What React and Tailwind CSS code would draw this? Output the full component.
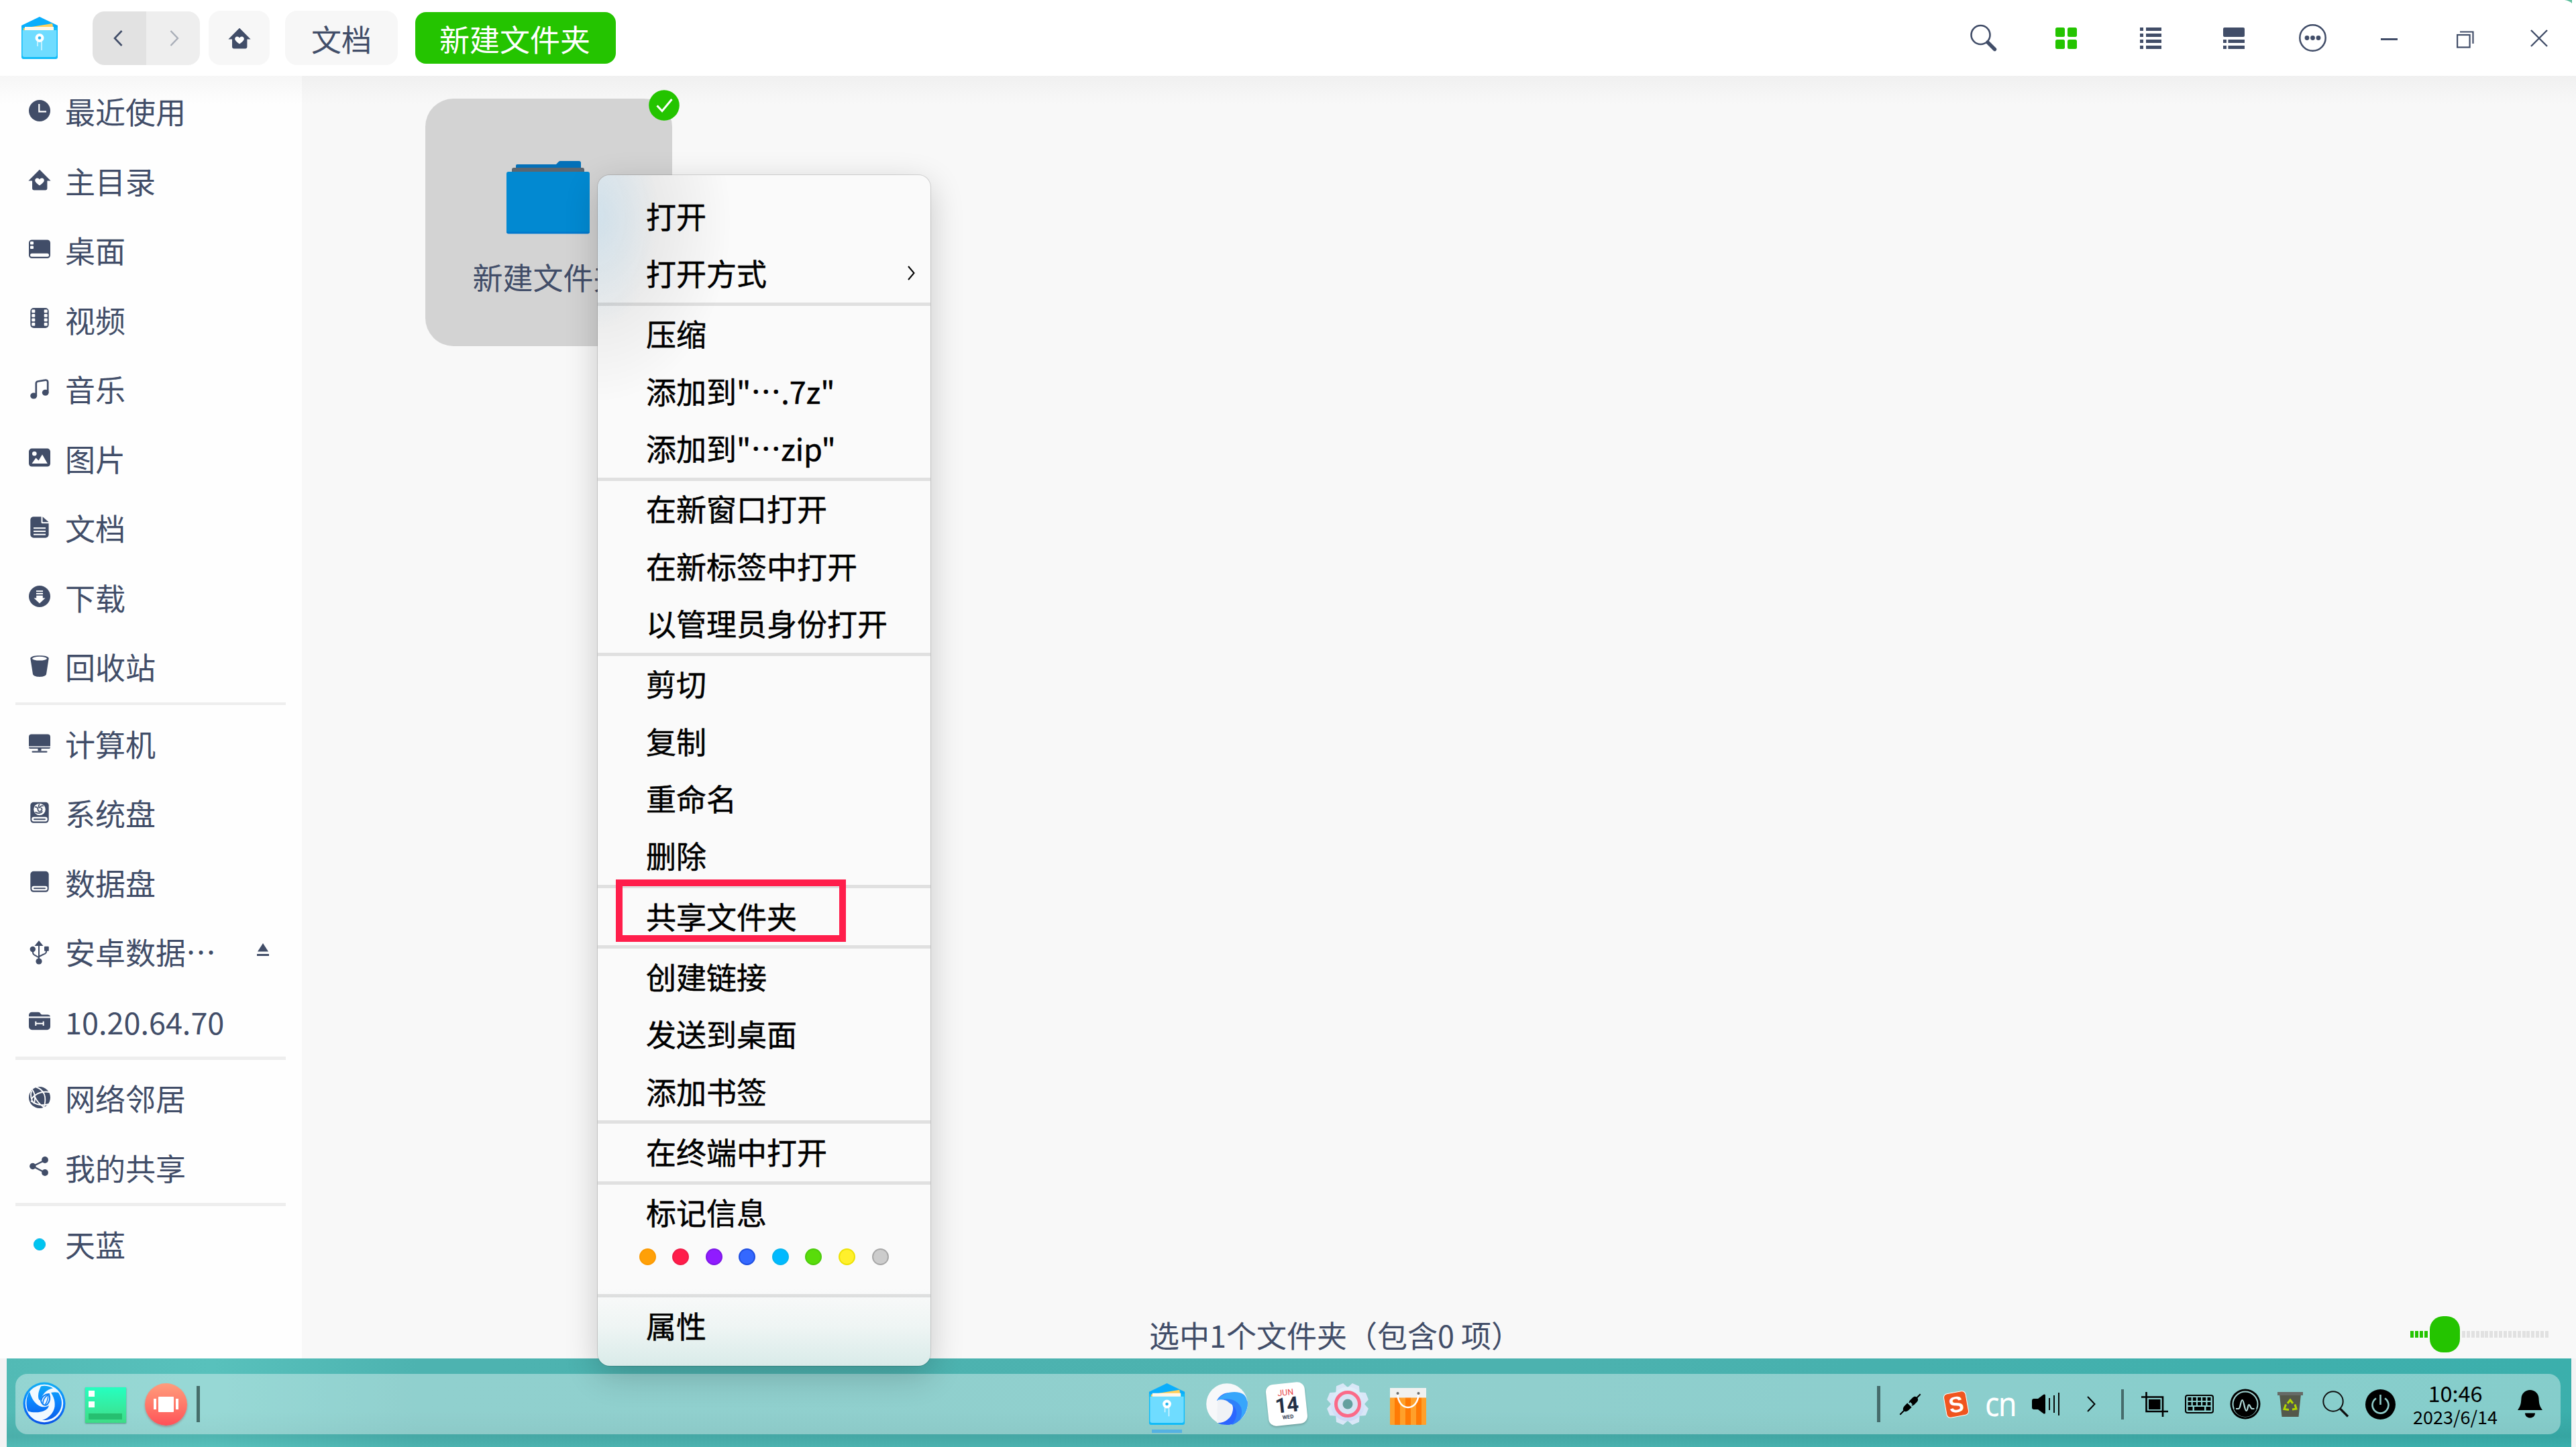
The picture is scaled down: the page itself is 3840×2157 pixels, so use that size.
import React from "react";

const INK = "#414d68";

/* ---------- sidebar glyphs, 32 x 32 ---------- */

function Glyph({ children }) {
  return (
    <svg viewBox="0 0 32 32" className="h-8 w-8 shrink-0 overflow-visible" fill={INK}>
      {children}
    </svg>
  );
}

const HouseShape = () => (
  <>
    <path d="M16 .8 32.6 17.6h-5.2V29a2.4 2.4 0 0 1-2.4 2.4H7.4A2.4 2.4 0 0 1 5 29V17.6H-.6z" />
    <path
      fill="#fff"
      d="M16 24.6c-4-3-6.8-5.2-6.8-7.8 0-2 1.500-3.300 3.300-3.300 1.500 0 2.800.8 3.500 2.100.7-1.300 2-2.100 3.500-2.100 1.800 0 3.300 1.300 3.300 3.300 0 2.600-2.800 4.800-6.800 7.800z"
    />
  </>
);

const Recent = () => (
  <Glyph>
    <circle cx="16" cy="16" r="16" />
    <path d="M15.300 6v11.300H26" fill="none" stroke="#fff" strokeWidth="2.200" />
  </Glyph>
);
const Home = () => (
  <Glyph>
    <HouseShape />
  </Glyph>
);
const Desktop = () => (
  <Glyph>
    <rect y="1.500" width="32" height="27.500" rx="4.500" />
    <rect x="2" y="4" width="5" height="4.500" rx="1" fill="#fff" />
    <rect x="2" y="10.500" width="5" height="4.500" rx="1" fill="#fff" />
    <rect x="2" y="21.800" width="28" height="5" rx="2.500" fill="#fff" />
  </Glyph>
);
const Video = () => (
  <Glyph>
    <rect x="2.300" width="27.400" height="30" rx="5" />
    {[2.5, 9, 15.500, 22].map((y) => (
      <g key={y} fill="#fff">
        <rect x="4.300" y={y} width="5" height="4.700" rx="1" />
        <rect x="22.700" y={y} width="5" height="4.700" rx="1" />
      </g>
    ))}
  </Glyph>
);
const Music = () => (
  <Glyph>
    <path
      d="M10.800 27V8.600c0-1.600 1-2.800 2.600-3.100l11-1.900c2-.4 3.800.8 3.800 2.800V22"
      fill="none"
      stroke={INK}
      strokeWidth="2.700"
    />
    <ellipse cx="7.200" cy="27" rx="5" ry="4.600" />
    <ellipse cx="24.700" cy="22.200" rx="4.900" ry="4.500" />
  </Glyph>
);
const Pictures = () => (
  <Glyph>
    <rect y="2.600" width="32" height="27" rx="4.500" />
    <circle cx="8.300" cy="10.300" r="3.300" fill="#fff" />
    <path d="M4.500 25 10.500 16.500l4 4 5.500-9 7.800 13.500z" fill="#fff" />
  </Glyph>
);
const Documents = () => (
  <Glyph>
    <path d="M7 .2h11.500v8.300c0 1 .7 1.800 1.800 1.800h9.300V27a4.700 4.700 0 0 1-4.700 4.700H7A4.700 4.700 0 0 1 2.300 27V4.900A4.700 4.700 0 0 1 7 .2z" />
    <path d="M20.500.3 29.600 8.300h-9.100z" />
    <path d="M7 17.200h18M7 22h18M7 26.800h18" stroke="#fff" strokeWidth="2" />
  </Glyph>
);
const Downloads = () => (
  <Glyph>
    <circle cx="16" cy="16" r="16" />
    <path d="M11 7.200h10v2H11zM11 11h10v2H11zM11.200 14.800h9.600v3.700h3.700L16 26.500l-8.500-8h3.700z" fill="#fff" />
  </Glyph>
);
const Trash = () => (
  <Glyph>
    <path d="M2.300 4.500C2.300 1.600 8 .2 16 .2s13.700 1.400 13.700 4.300L26 28c-.4 2.400-4.600 3.900-10 3.900S6.400 30.400 6 28z" />
    <ellipse cx="16" cy="4.700" rx="11" ry="2.900" fill="#fff" />
  </Glyph>
);
const Computer = () => (
  <Glyph>
    <path d="M4 3.500h24a4 4 0 0 1 4 4v14H0v-14a4 4 0 0 1 4-4zM0 23h32c0 1.600-1 2-2.500 2H18.500v3.500h-5V25h-11C1 25 0 24.600 0 23z" />
    <rect x="4.500" y="28.500" width="23" height="2.300" rx="1.100" />
  </Glyph>
);
const DiskBase = () => (
  <>
    <rect x="2.300" y=".8" width="27.400" height="31" rx="4.700" />
    <rect x="4.300" y="22.800" width="23.400" height="6.800" rx="3" fill="#fff" />
    <rect x="7" y="25.300" width="18" height="1.900" rx=".9" />
  </>
);
const SystemDisk = () => (
  <Glyph>
    <DiskBase />
    <circle cx="16" cy="11.500" r="8.800" fill="#fff" />
    <g fill="none" stroke={INK} strokeWidth="1.700">
      <path d="M9 8c3-.5 4.500 1 4.500 3.500s2 4 4.500 2.500 2-4.500-.5-4.500" />
      <path d="M16 3.500c-1.800 2-1.800 4-.5 6M9.500 15.500c3.500 2.500 8.500 2 11-1M22 6.500c-2.500-1-5 0-6 3" />
    </g>
  </Glyph>
);
const DataDisk = () => (
  <Glyph>
    <DiskBase />
  </Glyph>
);
const Usb = () => (
  <Glyph>
    <path d="M15 0 21.500 8h-13z" />
    <path d="M15 6v24M6 13v4.500c0 3 1.500 4 4 5l5 3M26 13v3.500c0 2.500-2 3.500-4.500 4.300L15 24" fill="none" stroke={INK} strokeWidth="2" />
    <circle cx="5.800" cy="13" r="4.200" />
    <rect x="23" y="8.800" width="6.800" height="7" rx="1" />
    <circle cx="15" cy="31" r="4.600" />
  </Glyph>
);
const NetFolder = () => (
  <Glyph>
    <path d="M4.500 3.700h9.500c1.800 0 2.500.8 3.500 2.200.8 1 1.600 1.600 3 1.600H28c2 0 3.500 1 4 2.800H0V8.200a4.500 4.500 0 0 1 4.500-4.500z" />
    <path d="M0 12.500h32v13a4.700 4.700 0 0 1-4.700 4.700H4.700A4.700 4.700 0 0 1 0 25.500z" />
    <path d="M10.300 17.500v6.500M21.700 17.500v6.500M10.300 20.800h11.400" stroke="#fff" strokeWidth="2" />
  </Glyph>
);
const Network = () => (
  <Glyph>
    <circle cx="16" cy="16" r="16" />
    <g fill="none" stroke="#fff" strokeWidth="1.900">
      <path d="M5 4C9 10 10 14 8 25M8 25C3 20 2 12 4 6M4 18C10 10 18 6 31 8M10 0c12 4 18 14 12 32M3 21c8 6 16 8 26 5M9 15c3 7 8 12 14 16" />
    </g>
  </Glyph>
);
const Share = () => (
  <Glyph>
    <path d="M24 6.500 6 15.500 24 25" fill="none" stroke={INK} strokeWidth="2.500" />
    <circle cx="5.800" cy="15.500" r="4.700" />
    <circle cx="24" cy="6" r="4.900" />
    <circle cx="24" cy="25" r="4.900" />
  </Glyph>
);
const SkyDot = () => (
  <Glyph>
    <circle cx="16" cy="17" r="8.600" fill="#00c5f0" stroke="#12b4ea" strokeWidth="1" />
  </Glyph>
);

const sidebar = [
  [
    ["最近使用", Recent],
    ["主目录", Home],
    ["桌面", Desktop],
    ["视频", Video],
    ["音乐", Music],
    ["图片", Pictures],
    ["文档", Documents],
    ["下载", Downloads],
    ["回收站", Trash],
  ],
  [
    ["计算机", Computer],
    ["系统盘", SystemDisk],
    ["数据盘", DataDisk],
    ["安卓数据⋯", Usb, true],
    ["10.20.64.70", NetFolder],
  ],
  [
    ["网络邻居", Network],
    ["我的共享", Share],
  ],
  [["天蓝", SkyDot]],
];

function Sidebar() {
  return (
    <nav className="w-[450px] shrink-0 bg-[linear-gradient(#f6f6f6,#fefefe_42px,#fefefe)] pt-[1.500px]">
      {sidebar.map((group, i) => (
        <React.Fragment key={i}>
          {i > 0 && <div className="mb-[6px] ml-[23px] mt-[0.500px] h-[4.500px] w-[403px] bg-[#eeeeee]" />}
          {group.map(([label, Icon, eject]) => (
            <div key={label} className="flex h-[103.500px] items-center gap-[22px] pl-[43px] pr-[49px]">
              <div className="-mt-[3px]">
                <Icon />
              </div>
              <span className="flex-1 whitespace-nowrap">{label}</span>
              {eject && (
                <svg viewBox="0 0 18 19" className="-mt-2 h-[19px] w-[18px]" fill={INK}>
                  <path d="M9 0l8 12.500H1zM0 16h18v3H0z" />
                </svg>
              )}
            </div>
          ))}
        </React.Fragment>
      ))}
    </nav>
  );
}

/* ---------- file manager logo, shared by title bar and dock ---------- */

function FilesLogo({ className }) {
  return (
    <svg viewBox="0 0 54 63" className={className}>
      <path d="M0 13 27 0l27 13v8H0z" fill="#0aaefc" />
      <path d="M0 16h54v44a3 3 0 0 1-3 3H3a3 3 0 0 1-3-3z" fill="#12bcf8" />
      <path d="M3 17 46 10l2 10H3z" fill="#ffd05a" />
      <path d="M5 15h43v7H5z" fill="#fff8ea" />
      <path d="M1.500 20h51v37a3 3 0 0 1-3 3h-45a3 3 0 0 1-3-3z" fill="#6fdcff" />
      <circle cx="27" cy="31.500" r="6.500" fill="#fff" />
      <circle cx="27" cy="31.500" r="2.300" fill="#27b5ee" />
      <path d="M24 37v7M30 37v13" stroke="#e4f8ff" strokeWidth="1.400" />
    </svg>
  );
}

function TitleBar() {
  return (
    <header className="flex h-[113px] shrink-0 items-center bg-white pl-[32px] pr-[42px]">
      <FilesLogo className="h-[63px] w-[54px]" />
      <div className="ml-[52px] flex h-20 w-40 overflow-hidden rounded-[18px]">
        <div className="flex flex-1 items-center justify-center bg-[#e2e2e2]">
          <svg viewBox="0 0 14 24" className="mr-1 h-6 w-[14px]" fill="none" stroke={INK} strokeWidth="2.600">
            <path d="M12.500 1 2 12l10.500 11" />
          </svg>
        </div>
        <div className="flex flex-1 items-center justify-center bg-[#eeeeee]">
          <svg viewBox="0 0 14 24" className="ml-1 h-6 w-[14px]" fill="none" stroke="#a9aeb8" strokeWidth="2.400">
            <path d="M1.500 1 12 12 1.500 23" />
          </svg>
        </div>
      </div>
      <div className="ml-[13px] flex h-[81px] w-[91px] items-center justify-center rounded-[18px] bg-[#f7f7f7]">
        <Glyph>
          <HouseShape />
        </Glyph>
      </div>
      <div className="ml-[23px] flex h-[81px] w-[168px] items-center justify-center rounded-[18px] bg-[#f7f7f7] pt-[2px]">
        文档
      </div>
      <div className="-mt-px ml-[26px] flex h-[77px] w-[299px] items-center justify-center rounded-[16px] bg-[#24c400] pt-[3px] pr-[2px] text-white">
        新建文件夹
      </div>

      <svg viewBox="0 0 40 41" className="ml-auto h-[41px] w-10" fill="none" stroke={INK}>
        <circle cx="15.500" cy="16" r="14" strokeWidth="2.600" />
        <path d="M26 27 36.500 37.500" strokeWidth="5.400" strokeLinecap="round" />
      </svg>
      <svg viewBox="0 0 32 32" className="ml-[87px] h-8 w-8" fill="#24c400">
        <rect width="14" height="14" rx="2.500" />
        <rect x="18" width="14" height="14" rx="2.500" />
        <rect y="18" width="14" height="14" rx="2.500" />
        <rect x="18" y="18" width="14" height="14" rx="2.500" />
      </svg>
      <svg viewBox="0 0 32 32" className="ml-[94px] h-8 w-8" fill={INK}>
        {[0, 9, 18, 27].map((y) => (
          <path key={y} d={`M0 ${y}h5v5H0zM9 ${y}h23v5H9z`} />
        ))}
      </svg>
      <svg viewBox="0 0 32 32" className="ml-[92px] h-8 w-8" fill={INK}>
        <rect width="32" height="14" rx="2" />
        <path d="M0 18h5v5H0zM7.500 18H32v5H7.500zM0 27h5v5H0zM7.500 27H32v5H7.500z" />
      </svg>
      <svg viewBox="0 0 41 41" className="ml-[81px] h-[41px] w-[41px]" fill={INK}>
        <circle cx="20.500" cy="20.500" r="19.200" fill="none" stroke={INK} strokeWidth="2.500" />
        <circle cx="12" cy="20.500" r="3.400" />
        <circle cx="20.500" cy="20.500" r="3.400" />
        <circle cx="29" cy="20.500" r="3.400" />
      </svg>
      <div className="ml-[81px] mt-[3px] h-[3px] w-[25px] bg-[#414d68]" />
      <svg viewBox="0 0 26 26" className="ml-[88px] mt-[4px] h-[26px] w-[26px]" fill="none" stroke={INK} strokeWidth="2.200">
        <rect x="1.100" y="6" width="18.500" height="18.500" />
        <path d="M5 1.500h19.500V19" />
      </svg>
      <svg viewBox="0 0 26 26" className="ml-[84px] h-[26px] w-[26px]" fill="none" stroke={INK} strokeWidth="2.400">
        <path d="M1 1l24 24M25 1 1 25" />
      </svg>
    </header>
  );
}

/* ---------- file area ---------- */

function FolderTile() {
  return (
    <div className="relative ml-[184px] mt-[34px] flex h-[369px] w-[368px] flex-col items-center rounded-[42px] bg-[#d3d3d3]">
      <svg viewBox="0 0 124 110" className="mr-[2px] mt-[93px] h-[110px] w-[124px] shrink-0 overflow-visible">
        <path d="M14 16V7a2 2 0 0 1 2-2h58l4-4.200a3 3 0 0 1 2-.8h28a3 3 0 0 1 3 3v13z" fill="#0370b8" />
        <path d="M8 18v-5a3 3 0 0 1 3-3h102a3 3 0 0 1 3 3v5z" fill="#5b6670" />
        <rect y="16" width="124" height="92" rx="3" fill="#0289d1" />
        <path d="M0 105.500h124a3 3 0 0 1-3 3H3a3 3 0 0 1-3-3z" fill="#0279cd" />
      </svg>
      <div className="mr-[2px] mt-[30px] whitespace-nowrap">新建文件夹</div>
      <svg viewBox="0 0 46 46" className="absolute -right-[11px] -top-[13px] h-[46px] w-[46px]">
        <circle cx="23" cy="23" r="22.800" fill="#24c400" />
        <path d="M12.500 23.500l7.500 8 14.500-17.500" fill="none" stroke="#fff" strokeWidth="3" />
      </svg>
    </div>
  );
}

function StatusBar() {
  return (
    <div className="mt-auto flex h-[72px] items-center">
      <div className="ml-[1263px] whitespace-pre pt-[1px]">选中1个文件夹（包含0 项）</div>
      <div className="ml-auto mr-[41px] flex h-[54px] items-center">
        <div className="flex w-[29px] gap-[2px]">
          {[0, 1, 2, 3].map((i) => (
            <div key={i} className="h-[10px] w-[5px] bg-[#24c400]" />
          ))}
        </div>
        <div className="h-[54px] w-[45px] rounded-[20px] bg-[#24c400]" />
        <div className="flex w-[132px] gap-[1.900px] pl-[3px]">
          {Array.from({ length: 19 }, (_, i) => (
            <div key={i} className="h-[10px] w-[5px] shrink-0 bg-[#e1e1e1]" />
          ))}
        </div>
      </div>
    </div>
  );
}

/* ---------- context menu ---------- */

const menu = [
  ["打开", "打开方式"],
  ["压缩", '添加到"⋯.7z"', '添加到"⋯zip"'],
  ["在新窗口打开", "在新标签中打开", "以管理员身份打开"],
  ["剪切", "复制", "重命名", "删除"],
  ["共享文件夹"],
  ["创建链接", "发送到桌面", "添加书签"],
  ["在终端中打开"],
  ["标记信息"],
  ["属性"],
];

const tagColors = [
  "bg-[#ffa008] border-[#fb9a02]",
  "bg-[#ff1c49] border-[#f01c48]",
  "bg-[#901bff] border-[#7d18e6]",
  "bg-[#3468ff] border-[#1f4fe0]",
  "bg-[#00b9ff] border-[#07b6ee]",
  "bg-[#59dc0a] border-[#4ccb0c]",
  "bg-[#fff02c] border-[#ece205]",
  "bg-[#cccccc] border-[#a8a8a8]",
];

function ContextMenu() {
  return (
    <div className="absolute left-[891px] top-[261px] w-[496px] rounded-[18px] bg-[#fafafa] bg-[linear-gradient(to_bottom,transparent_1660px,#eff5f4_1715px,#d9ebe9_1776px)] pb-[17px] pt-[19px] text-black shadow-[0_14px_50px_rgba(0,0,0,0.2),0_0_0_1px_rgba(0,0,0,0.13)]">
      <div className="absolute left-0 top-0 h-[340px] w-[260px] rounded-tl-[18px] bg-[radial-gradient(ellipse_90px_170px_at_0_60px,rgba(190,222,242,0.5),transparent),radial-gradient(ellipse_200px_270px_at_0_70px,rgba(0,0,0,0.09),rgba(0,0,0,0.06)_50%,transparent)]" />
      <div className="relative">
        {menu.map((group, i) => (
          <React.Fragment key={i}>
            {i > 0 && <div className="h-[4.900px] bg-black/10" />}
            {group.map((label) => (
              <div key={label} className="flex h-[85.380px] items-center justify-between pb-[2px] pl-[72px] pr-[23px]">
                <span className="whitespace-nowrap [-webkit-text-stroke:0.500px_#000]">{label}</span>
                {label === "打开方式" && (
                  <svg viewBox="0 0 11 22" className="h-[22px] w-[11px]" fill="none" stroke="#000" strokeWidth="2">
                    <path d="M1 1l8.500 10L1 21" />
                  </svg>
                )}
              </div>
            ))}
            {group[0] === "标记信息" && (
              <div className="flex h-[78px] items-start gap-[24.600px] pl-[61.500px] pt-[10px]">
                {tagColors.map((c) => (
                  <div key={c} className={`h-[25px] w-[25px] rounded-full border-2 ${c}`} />
                ))}
              </div>
            )}
          </React.Fragment>
        ))}
      </div>
      <div className="absolute left-[27px] top-[1050px] h-[93px] w-[343px] border-[10px] border-[#ff1e4b]" />
    </div>
  );
}

/* ---------- dock ---------- */

function Launcher() {
  return (
    <svg viewBox="0 0 64 64" className="h-16 w-16">
      <defs>
        <linearGradient id="launch" x1="0" y1="0" x2="0" y2="64" gradientUnits="userSpaceOnUse">
          <stop offset="0" stopColor="#12b0f2" />
          <stop offset=".45" stopColor="#0a86ff" />
          <stop offset="1" stopColor="#0b52e4" />
        </linearGradient>
      </defs>
      <circle cx="32" cy="32" r="31.500" fill="url(#launch)" />
      <circle cx="32" cy="32" r="28.200" fill="#f1f9ff" />
      <g fill="url(#launch)">
        <path d="M27 6.500c5-1.500 13-.5 18 3-8 1-15 7-19 18-2 0-3-3-3-7 0-5 2-10 4-14z" />
        <path d="M10 14.500c3 9 6 15 12 19.500 5 4 12 4.500 17 1-1 5-6 8.500-12 9.500-7 1.500-14 1-19.500-1C4 33 5 22 10 14.500z" />
        <path d="M42 16c4-1 8-1 11 0 4 6 6 13 4.500 20C55 49 43 58 29 57c10-3 17-11 18.500-20 1-8-1.500-15-5.500-21z" />
      </g>
      <g fill="none" stroke="#0a7df5" strokeWidth="2">
        <path d="M27 28c1-6 6-10 12-10 2 5 1 11-2 15-3 3-8 2-10-5z" />
        <path d="M30 32c0-5 3-10 8-13M33.500 33.500c3-4 4-8 4.500-14" strokeWidth="1.500" />
      </g>
    </svg>
  );
}

function Multitask() {
  return (
    <div className="flex h-[53px] w-[61px] flex-col justify-between bg-linear-to-b from-[#24ffc0] to-[#3ddc86] px-[5px] py-[5px] shadow-[0_1px_2px_rgba(0,80,50,0.5)]">
      <div className="flex flex-col gap-[7px]">
        <div className="h-[9px] w-[9px] bg-white" />
        <div className="h-[9px] w-[9px] bg-white" />
      </div>
      <div className="h-[9px] w-[50px] bg-[#26bf70]" />
    </div>
  );
}

function Recorder() {
  return (
    <div className="flex h-[63px] w-[63px] items-center justify-center gap-[3px] rounded-full bg-linear-to-b from-[#ff9c7c] to-[#ff5058] shadow-[0_2px_3px_rgba(150,40,40,0.35)]">
      <div className="h-4 w-1 bg-white" />
      <div className="h-[23px] w-[23px] rounded-[1px] bg-white" />
      <div className="h-4 w-1 bg-white" />
    </div>
  );
}

function Browser() {
  return (
    <svg viewBox="0 0 62 64" className="h-16 w-[62px]">
      <circle cx="31" cy="32" r="30.800" fill="#f7f8fa" />
      <path d="M61.500 28C63 45 50 63 31 63c-6 0-11-1-15-4 12 0 24-8 24-21 0-8-7-14-24-11 6-14 28-18 45.500 1z" fill="#2b66ff" />
      <path d="M16 27c7-11 22-15 34-12 8 2 12 8 11.500 20C60 44 56 50 50 56c5-17-4-32-34-29z" fill="#37a6fb" />
      <path d="M16 27c14-6 31-2 36 10 2 6 1 13-2 19 0 0-5 5-12 7 16-18 5-37-22-36z" fill="#2f80fa" />
      <path d="M17 26c12-3 23 5 22 17-1 10-12 18-23 17" fill="#f0f2f6" />
    </svg>
  );
}

function Calendar() {
  return (
    <div className="flex h-[62px] w-[58px] -rotate-6 flex-col items-center rounded-[11px] bg-white pt-[6px] font-['Roboto'] shadow-[0_2px_3px_rgba(0,0,0,0.2)]">
      <div className="text-[12.500px] leading-[15px] text-[#e8474c]">JUN</div>
      <div className="-mt-[4px] text-[31px] font-bold leading-[32px] tracking-[-0.500px] text-[#232f45]">14</div>
      <div className="-mt-[3px] text-[8px] font-bold leading-[10px] text-[#3a465a]">WED</div>
    </div>
  );
}

function Settings() {
  return (
    <svg viewBox="0 0 64 64" className="h-16 w-16">
      <defs>
        <linearGradient id="gear" x1="0" y1="0" x2="0" y2="64" gradientUnits="userSpaceOnUse">
          <stop offset="0" stopColor="#e2f3fa" />
          <stop offset="1" stopColor="#c9d6f6" />
        </linearGradient>
      </defs>
      <g fill="#d9e7f7">
        {[22.500, 67.500, 112.500, 157.500].map((a) => (
          <path key={a} d="M26.500.8h11l3.500 7v48.400l-3.500 7h-11l-3.500-7V7.800z" transform={`rotate(${a} 32 32)`} />
        ))}
        <circle cx="32" cy="32" r="25.500" fill="url(#gear)" />
      </g>
      <circle cx="32" cy="32" r="17.500" fill="#d7e4f4" stroke="#fb6a88" strokeWidth="5" />
      <circle cx="32" cy="32" r="7.500" fill="#63a09f" />
    </svg>
  );
}

function Store() {
  return (
    <svg viewBox="0 0 54 55" className="h-[55px] w-[54px]">
      <rect width="54" height="55" rx="1" fill="#ffa02a" />
      <path d="M7 14h8v41H7zM23 14h8v41h-8zM39 14h8v41h-8z" fill="#ff7a05" />
      <path d="M0 0h54v14.500H0z" fill="#f1f1f0" />
      <path d="M11.500 8c0 28 31 28 31 0" fill="none" stroke="#fff" strokeWidth="2.600" />
      <circle cx="11.500" cy="8" r="2" fill="#6d6d6d" />
      <circle cx="42.500" cy="8" r="2" fill="#6d6d6d" />
    </svg>
  );
}

function Tray() {
  return (
    <>
      <div className="h-[54px] w-[5px] bg-[#456b6b]" />
      <svg viewBox="0 0 33 33" className="ml-7 h-[33px] w-[33px]">
        <g transform="rotate(45 16.500 16.500)">
          <path d="M15.500-5h2v7c2 .5 3.500 2 3.500 5v7h-9V7c0-3 1.500-4.500 3.500-5z" />
          <path d="M12 18h9v5c0 4-1.500 6.500-3.500 7v8h-2v-8c-2-.5-3.500-3-3.500-7z" />
          <path d="M13.500 13v3M19.500 13v3" stroke="#000" strokeWidth="1.500" />
        </g>
      </svg>
      <div className="ml-[35px] flex h-[37px] w-[34px] -rotate-10 items-center justify-center rounded-[6px] border-[1.500px] border-white bg-[#f0551f] font-['Liberation_Sans'] text-[33px] font-bold leading-none text-white">
        S
      </div>
      <div className="ml-[26px] w-[45px] origin-left scale-x-92 pb-[2px] font-['Noto_Sans'] text-[49px] leading-none tracking-[-2px] text-white">
        cn
      </div>
      <svg viewBox="0 0 41 34" className="ml-[25px] h-[34px] w-[41px]">
        <path d="M0 12c0-2 1-3 3-3h6l8-6c1.500-1 3-.5 3 1v26c0 1.500-1.500 2-3 1l-8-6H3c-2 0-3-1-3-3z" />
        <path d="M26 8v18M33 4v26M40 0v34" stroke="#000" strokeWidth="1.900" />
      </svg>
      <svg viewBox="0 0 13 24" className="ml-[41px] h-6 w-[13px]" fill="none" stroke="#000" strokeWidth="2">
        <path d="M1 1l10.500 11L1 23" />
      </svg>
      <div className="ml-[38px] h-[45px] w-1 bg-[#456b6b]" />
      <svg viewBox="0 0 40 37" className="ml-[26px] h-[37px] w-10">
        <path d="M7.500 0v29H40M0 7.500h32V37" fill="none" stroke="#000" strokeWidth="2.600" />
        <rect x="11" y="11" width="17.500" height="15" />
      </svg>
      <svg viewBox="0 0 43 28" className="ml-[25px] h-7 w-[43px]">
        <rect x="1" y="1" width="41" height="26" rx="3" fill="none" stroke="#000" strokeWidth="2" />
        {[4, 11].map((y) =>
          [4.500, 11.800, 19, 26.200, 33.500].map((x) => <rect key={`${x}${y}`} x={x} y={y} width="5" height="5" />)
        )}
        <path d="M4.500 18h7v5.500h-7zM14 18h15v5.500H14zM31.500 18h7v5.500h-7z" />
      </svg>
      <svg viewBox="0 0 46 46" className="ml-[24px] h-[46px] w-[46px]">
        <circle cx="23" cy="23" r="22.500" />
        <circle cx="23" cy="23" r="18.500" fill="none" stroke="#9fd2d0" strokeWidth="2" />
        <path d="M6 30h34a18 18 0 0 1-34 0z" />
        <path d="M9 30h4c3 0 3-13 5.500-13S22 33 24.500 33s2-9 4-9 2 6 5 6h3" fill="none" stroke="#b4dedc" strokeWidth="2.200" />
      </svg>
      <svg viewBox="0 0 38 37" className="ml-[25px] h-[37px] w-[38px]">
        <path d="M3 3h32l-3.500 34h-25z" fill="#54584a" />
        <path d="M0 0h38v5H0z" fill="#666a66" />
        <g fill="none" stroke="#b3d600" strokeWidth="3">
          <path d="M15 17l4-5 4 5M26 18.500l2 6.500-6 1M17 26.500l-7-1 2.500-7" />
        </g>
      </svg>
      <svg viewBox="0 0 40 40" className="ml-[29px] h-10 w-10" fill="none" stroke="#111">
        <circle cx="16" cy="16" r="14.700" strokeWidth="2" />
        <path d="M26.500 27 38 38.500" strokeWidth="3.200" />
      </svg>
      <svg viewBox="0 0 45 45" className="ml-[24px] h-[45px] w-[45px]">
        <circle cx="22.500" cy="22.500" r="22.500" />
        <path d="M16 13.500a12 12 0 1 0 13 0M22.500 8v15" fill="none" stroke="#8fcbc9" strokeWidth="2.600" />
      </svg>
      <div className="ml-[24px] flex w-[130px] flex-col items-center text-black">
        <div className="text-[32.500px] leading-[38px]">10:46</div>
        <div className="text-[27px] leading-[34px]">2023/6/14</div>
      </div>
      <svg viewBox="0 0 37 42" className="ml-[28px] h-[42px] w-[37px]">
        <path d="M18.500 0c7 0 12.500 5 13 12 .4 8 1 12 5.500 18H0C4.500 24 5 20 5.500 12 6 5 11.500 0 18.500 0zM11 34.500h15c0 4.500-3.500 7-7.500 7S11 39 11 34.500z" />
      </svg>
    </>
  );
}

function Dock() {
  return (
    <footer className="h-[132px] shrink-0 bg-[#f4f3f4] pl-[10px] pr-[7px]">
      <div className="h-full bg-[linear-gradient(to_bottom,transparent_60%,rgba(0,60,60,0.09)_88%,transparent),linear-gradient(to_right,#52bab5,#58c1bc_8%,#4db3b0_16%,#4cb2af_60%,#3bafac)] pl-[13px] pr-[16px] pt-[23px]">
        <div className="flex h-[90px] items-center rounded-[18px] bg-white/38 pl-[11px] pr-[27px]">
          <div className="-mt-[2px]">
            <Launcher />
          </div>
          <div className="ml-[29px] mt-[2px]">
            <Multitask />
          </div>
          <div className="ml-[28px]">
            <Recorder />
          </div>
          <div className="ml-[14px] h-[54px] w-[5px] bg-[#466e6b]" />

          <div className="ml-[1414px] flex flex-col items-center pt-[12px]">
            <FilesLogo className="h-[62px] w-[55px]" />
            <div className="mt-[7px] h-[5px] w-[45px] bg-[#55b1e2]" />
          </div>
          <div className="ml-[31px]">
            <Browser />
          </div>
          <div className="ml-[29px]">
            <Calendar />
          </div>
          <div className="ml-[30px]">
            <Settings />
          </div>
          <div className="ml-[31px] mt-[7px]">
            <Store />
          </div>
          <div className="ml-auto flex items-center">
            <Tray />
          </div>
        </div>
      </div>
    </footer>
  );
}

export default function App() {
  return (
    <div className="relative flex h-[2157px] w-[3840px] flex-col overflow-hidden bg-white font-['Noto_Sans_CJK_SC','Noto_Sans',sans-serif] text-[45px] leading-[66px] text-[#414d68]">
      <TitleBar />
      <div className="flex min-h-0 flex-1">
        <Sidebar />
        <main className="flex flex-1 flex-col bg-[linear-gradient(#f0f0f0,#f8f8f8_42px,#f8f8f8)]">
          <FolderTile />
          <StatusBar />
        </main>
      </div>
      <Dock />
      <ContextMenu />
      <svg viewBox="0 0 12 5" className="absolute right-[5px] top-0 h-[5px] w-3">
        <path d="M0 0h11v5C9 2.500 5 1 0 0z" fill="#5bbd9a" />
      </svg>
    </div>
  );
}
